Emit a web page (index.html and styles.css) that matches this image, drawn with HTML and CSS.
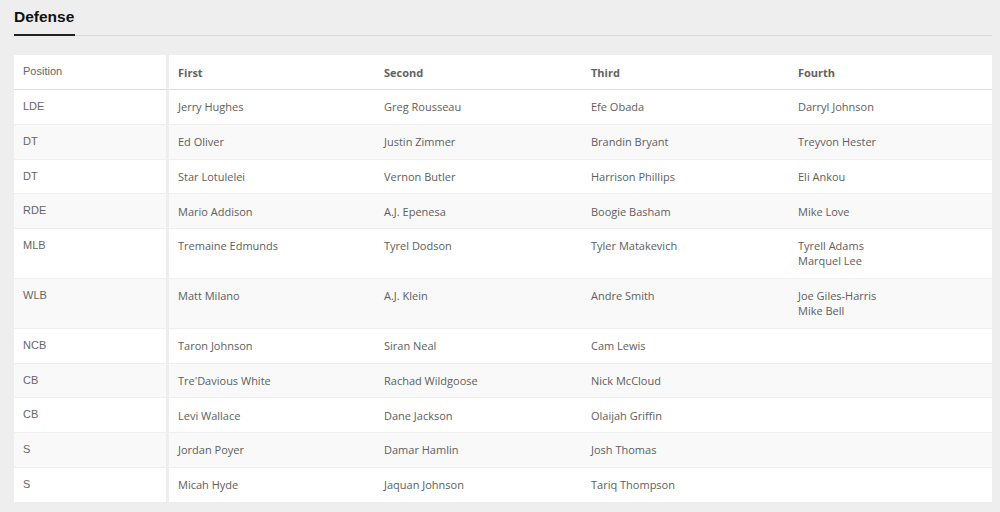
FILE: index.html
```html
<!DOCTYPE html>
<html>
<head>
<meta charset="utf-8">
<link rel="stylesheet" href="styles.css">
</head>
<body>
<div class="wrap">
  <div class="tabs"><h2 class="tab">Defense</h2></div>
  <table class="depth">
    <colgroup>
      <col class="col-pos">
      <col class="col-1">
      <col class="col-a">
      <col class="col-a">
      <col class="col-last">
    </colgroup>
    <thead>
      <tr><th class="pos">Position</th><th>First</th><th>Second</th><th>Third</th><th>Fourth</th></tr>
    </thead>
    <tbody>
      <tr><td class="pos">LDE</td><td>Jerry Hughes</td><td>Greg Rousseau</td><td>Efe Obada</td><td>Darryl Johnson</td></tr>
      <tr><td class="pos">DT</td><td>Ed Oliver</td><td>Justin Zimmer</td><td>Brandin Bryant</td><td>Treyvon Hester</td></tr>
      <tr><td class="pos">DT</td><td>Star Lotulelei</td><td>Vernon Butler</td><td>Harrison Phillips</td><td>Eli Ankou</td></tr>
      <tr><td class="pos">RDE</td><td>Mario Addison</td><td>A.J. Epenesa</td><td>Boogie Basham</td><td>Mike Love</td></tr>
      <tr><td class="pos">MLB</td><td>Tremaine Edmunds</td><td>Tyrel Dodson</td><td>Tyler Matakevich</td><td>Tyrell Adams<br>Marquel Lee</td></tr>
      <tr><td class="pos">WLB</td><td>Matt Milano</td><td>A.J. Klein</td><td>Andre Smith</td><td>Joe Giles-Harris<br>Mike Bell</td></tr>
      <tr><td class="pos">NCB</td><td>Taron Johnson</td><td>Siran Neal</td><td>Cam Lewis</td><td></td></tr>
      <tr><td class="pos">CB</td><td>Tre'Davious White</td><td>Rachad Wildgoose</td><td>Nick McCloud</td><td></td></tr>
      <tr><td class="pos">CB</td><td>Levi Wallace</td><td>Dane Jackson</td><td>Olaijah Griffin</td><td></td></tr>
      <tr><td class="pos">S</td><td>Jordan Poyer</td><td>Damar Hamlin</td><td>Josh Thomas</td><td></td></tr>
      <tr><td class="pos">S</td><td>Micah Hyde</td><td>Jaquan Johnson</td><td>Tariq Thompson</td><td></td></tr>
    </tbody>
  </table>
</div>
</body>
</html>
```
FILE: styles.css
```css
html, body {
  margin: 0;
  padding: 0;
  background: #eeeeee;
}
.wrap {
  padding: 0 8px 0 14px;
}
.tabs {
  border-bottom: 1px solid #d9d9d9;
  display: flex;
  padding-top: 8px;
}
.tab {
  margin: 0 0 -1px 0;
  font-family: "Liberation Sans", Arial, sans-serif;
  font-weight: bold;
  font-size: 15.5px;
  line-height: 18px;
  color: #111;
  padding: 0 1px 8px 0;
  border-bottom: 2px solid #222;
}
.depth {
  margin-top: 19px;
  width: 978px;
  border-collapse: separate;
  border-spacing: 0;
  background: #fff;
  table-layout: fixed;
}
.col-pos { width: 155px; }
.col-1 { width: 206px; }
.col-a { width: 207px; }
.col-last { width: 203px; }
.depth th, .depth td {
  font-family: "Open Sans", sans-serif;
  font-size: 11px;
  line-height: 15px;
  color: #5e5e5e;
  text-align: left;
  vertical-align: top;
  padding: 9.3px 9px 9.5px 9px;
  border-bottom: 1px solid #efefef;
}
.depth th {
  font-weight: bold;
  color: #626262;
  padding-top: 10px;
  padding-bottom: 9px;
  border-bottom: 1px solid #dcdcdc;
}
.depth .pos {
  border-right: 3px solid #eeeeee;
  font-family: "Liberation Sans", Arial, sans-serif;
  font-weight: normal;
  color: #666;
  padding-top: 9px;
  padding-bottom: 9.8px;
}
.depth th.pos {
  padding-top: 9px;
  padding-bottom: 10px;
}
.depth tbody tr:nth-child(even) td {
  background: #f9f9f9;
}
.depth tbody tr:last-child td {
  border-bottom: 0;
}
```
